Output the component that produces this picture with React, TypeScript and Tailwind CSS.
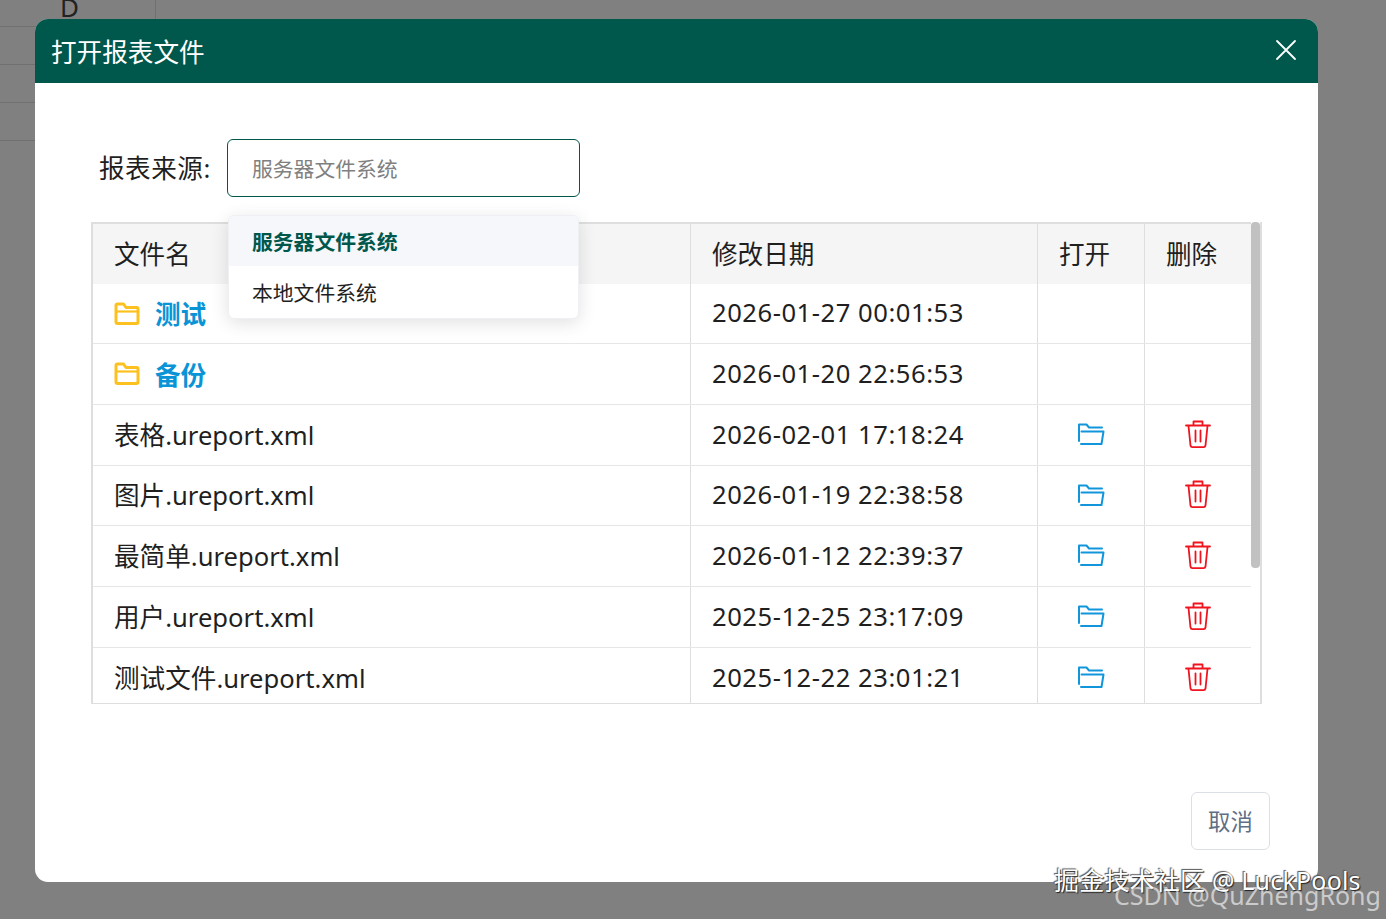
const FONT = '"Noto Sans", "Noto Sans CJK SC", sans-serif';

const folders = [
  { name: '测试', date: '2026-01-27 00:01:53', h: 'h-[60px]' },
  { name: '备份', date: '2026-01-20 22:56:53', h: 'h-[61px]' },
];

const files = [
  { name: '表格.ureport.xml', date: '2026-02-01 17:18:24', h: 'h-[61px]' },
  { name: '图片.ureport.xml', date: '2026-01-19 22:38:58', h: 'h-[60px]' },
  { name: '最简单.ureport.xml', date: '2026-01-12 22:39:37', h: 'h-[61px]' },
  { name: '用户.ureport.xml', date: '2025-12-25 23:17:09', h: 'h-[61px]' },
  { name: '测试文件.ureport.xml', date: '2025-12-22 23:01:21', h: 'h-[61px]' },
];

function YellowFolder() {
  return (
    <svg width="26" height="24" viewBox="0 0 26 24" fill="none" stroke="#fdc11f" strokeWidth="3" strokeLinejoin="round">
      <path d="M2 3.500a1.500 1.500 0 0 1 1.500-1.500h6l2.500 3.500h10.500a1.500 1.500 0 0 1 1.500 1.500v13a1.500 1.500 0 0 1-1.500 1.500h-19a1.500 1.500 0 0 1-1.500-1.500z" />
      <path d="M2 9.500h22" strokeWidth="2.200" />
    </svg>
  );
}

function OpenFolder() {
  return (
    <svg width="28" height="24" viewBox="0 0 28 24" fill="none" stroke="#1296db" strokeWidth="2" strokeLinecap="round" strokeLinejoin="round">
      <path d="M2 19V2.500h7.500l2.500 3h13" />
      <path d="M4.500 9.500h22l-2 12.500H4" />
    </svg>
  );
}

function Trash() {
  return (
    <svg width="26" height="29" viewBox="0 0 26 29" fill="none" stroke="#f0141e" strokeWidth="1.8" strokeLinecap="round" strokeLinejoin="round">
      <path d="M1 5.500h24" />
      <path d="M8.500 5V1.500h9V5" />
      <path d="M3.500 6l2 19.500a2 2 0 0 0 2 1.700h11a2 2 0 0 0 2-1.700L22.500 6" />
      <path d="M10.500 10.500v11M15.500 10.500v11" />
    </svg>
  );
}

function Row({ h, children }: { h: string; children: React.ReactNode }) {
  return <div className={`flex border-b border-[#e6e6e6] ${h}`}>{children}</div>;
}

function NameCell({ children }: { children: React.ReactNode }) {
  return <div className="flex w-[598px] items-center gap-[15px] border-r border-[#dedede] pl-[21px]">{children}</div>;
}

function DateCell({ children }: { children: React.ReactNode }) {
  return <div className="flex w-[347px] items-center border-r border-[#dedede] pl-[21px]">{children}</div>;
}

function BackgroundSheet() {
  return (
    <div className="h-[919px] w-full overflow-hidden bg-[#808080]">
      <div className="flex h-[27px] w-[156px] items-start justify-end border-r border-b border-[#707070] pr-[76px]">
        <span className="-mt-[8px] text-[26px] leading-[30px] text-[#222]">D</span>
      </div>
      <div className="h-[38px] w-[40px] border-b border-[#707070]" />
      <div className="h-[38px] w-[40px] border-b border-[#707070]" />
      <div className="h-[38px] w-[40px] border-b border-[#707070]" />
    </div>
  );
}

export default function App() {
  return (
    <div className="relative h-[919px] w-[1386px] overflow-hidden" style={{ fontFamily: FONT }}>
      <BackgroundSheet />

      {/* dialog */}
      <div className="absolute top-[19px] left-[35px] flex h-[863px] w-[1283px] flex-col rounded-[13px] bg-white">
        <div className="flex h-[64px] shrink-0 items-center justify-between rounded-t-[13px] bg-[#00584c] pr-[21px] pl-[16px]">
          <span className="pt-[4px] text-[25.6px] text-white">打开报表文件</span>
          <svg width="22" height="22" viewBox="0 0 22 22" stroke="white" strokeWidth="1.800" strokeLinecap="round" className="mb-[2px]">
            <path d="M2 2l18 18M20 2L2 20" />
          </svg>
        </div>

        <div className="flex flex-1 flex-col pt-[56px] pr-[48px] pl-[57px]">
          <div className="relative ml-[7px] flex h-[58px] items-center gap-[15px]">
            <span className="w-[113px] pt-[2px] text-[25.6px] tracking-[0.5px] whitespace-nowrap text-[#1f1f1f]">报表来源:</span>
            <div className="flex h-[58px] w-[353px] items-center rounded-[6px] border border-[#00584c] pt-[4px] pl-[24px] text-[20.8px] text-[#808080]">
              服务器文件系统
            </div>
            {/* dropdown */}
            <div className="absolute top-[76px] left-[129px] z-10 w-[351px] overflow-hidden rounded-[6px] border border-[#eef0f3] bg-white shadow-[0_4px_18px_rgba(0,0,0,0.12)]">
              <div className="flex h-[50px] items-center bg-[#f5f7fa] pt-[4px] pl-[23px] text-[20.8px] font-bold text-[#00584c]">
                服务器文件系统
              </div>
              <div className="flex h-[52px] items-center pt-[4px] pl-[23px] text-[20.8px] text-[#1f1f1f]">本地文件系统</div>
            </div>
          </div>

          {/* table */}
          <div className="relative mt-[25px] -ml-[1px] h-[482px] w-[1171px] border-t-2 border-r-2 border-b border-l-2 border-[#dedede]">
            <div className="h-full overflow-hidden">
              <div className="flex h-[60px] bg-[#f5f5f5] text-[25.6px] text-[#1f1f1f]">
                <NameCell>
                  <span className="pt-[3px]">文件名</span>
                </NameCell>
                <DateCell>
                  <span className="pt-[3px]">修改日期</span>
                </DateCell>
                <div className="flex w-[107px] items-center border-r border-[#dedede] pt-[3px] pl-[21px]">打开</div>
                <div className="flex w-[107px] items-center pt-[3px] pl-[21px]">删除</div>
              </div>
              {folders.map((f) => (
                <Row key={f.name} h={f.h}>
                  <NameCell>
                    <YellowFolder />
                    <span className="pt-[4px] text-[25.6px] font-bold text-[#0a94d6]">{f.name}</span>
                  </NameCell>
                  <DateCell>
                    <span className="text-[25.6px] tracking-[0.53px] text-[#1f1f1f]">{f.date}</span>
                  </DateCell>
                  <div className="w-[107px] border-r border-[#dedede]" />
                  <div className="w-[107px]" />
                </Row>
              ))}
              {files.map((f) => (
                <Row key={f.name} h={f.h}>
                  <NameCell>
                    <span className="pt-[2px] text-[25.6px] whitespace-nowrap text-[#1f1f1f]">{f.name}</span>
                  </NameCell>
                  <DateCell>
                    <span className="text-[25.6px] tracking-[0.53px] text-[#1f1f1f]">{f.date}</span>
                  </DateCell>
                  <div className="flex w-[107px] items-center border-r border-[#dedede] pb-[2px] pl-[39px]">
                    <OpenFolder />
                  </div>
                  <div className="flex w-[107px] items-center pb-[2px] pl-[40px]">
                    <Trash />
                  </div>
                </Row>
              ))}
            </div>
            {/* scrollbar */}
            <div className="absolute -top-[2px] right-0 bottom-0 w-[9px] bg-white">
              <div className="h-[346px] w-full rounded-[4px] bg-[#c1c1c1]" />
            </div>
          </div>

          <div className="mt-[88px] flex justify-end">
            <button className="flex h-[58px] w-[79px] items-center justify-center rounded-[6px] border border-[#dcdfe6] bg-white pt-[2px] text-[22.4px] text-[#606f85]">
              取消
            </button>
          </div>
        </div>
      </div>

      {/* watermarks */}
      <span className="absolute top-[862px] left-[1054px] text-[25px] leading-[36px] tracking-[0.2px] whitespace-nowrap text-white [text-shadow:1px_1px_1px_#222,-1px_-1px_1px_#555]">
        掘金技术社区 @ LuckPools
      </span>
      <span className="absolute top-[877px] left-[1114px] text-[25px] leading-[36px] whitespace-nowrap text-white/60">
        CSDN @QuZhengRong
      </span>
    </div>
  );
}
